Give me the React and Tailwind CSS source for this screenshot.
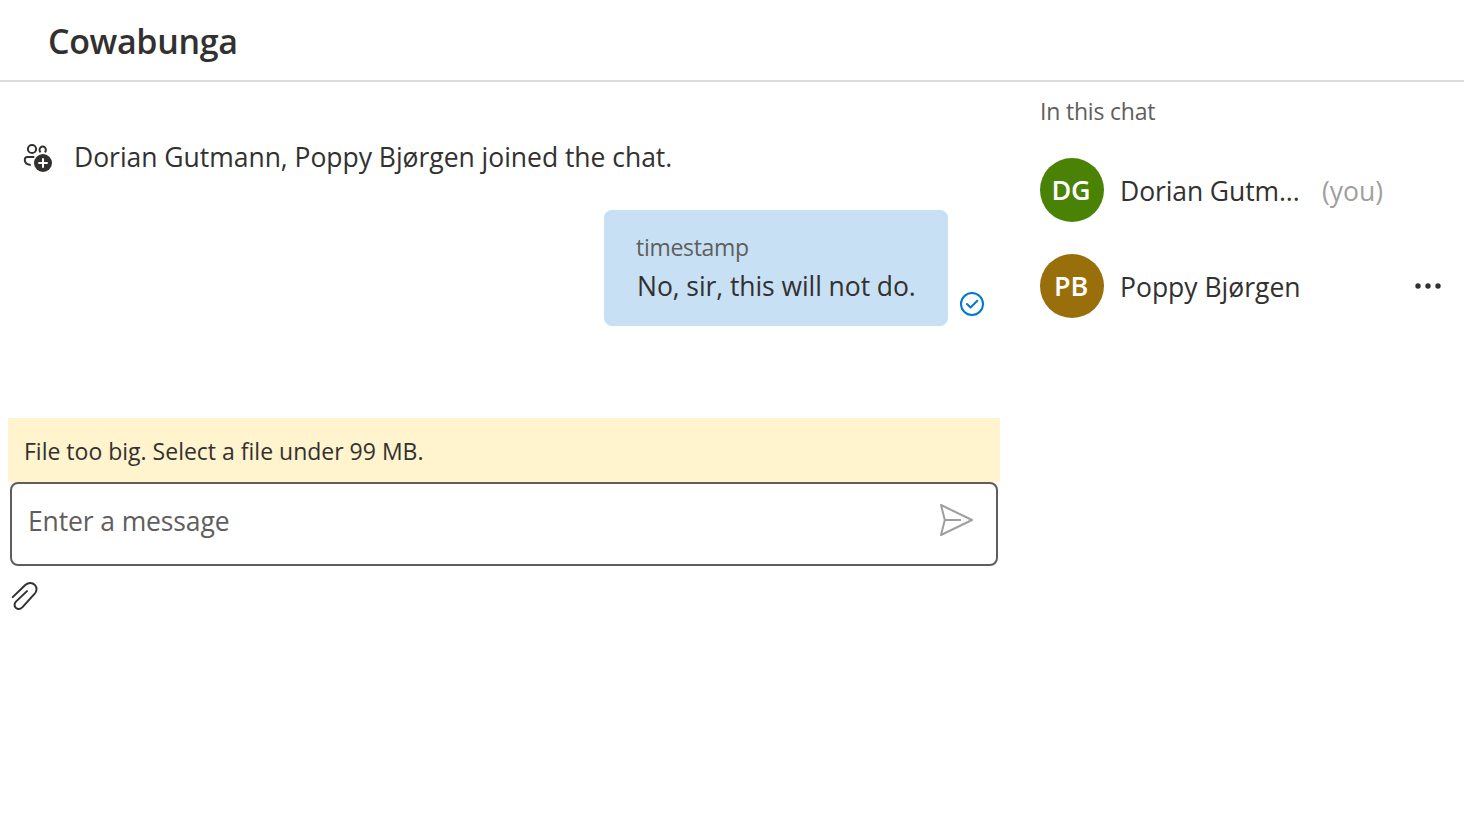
function PeopleAddIcon() {
  return (
    <svg className="h-8 w-8 shrink-0" viewBox="0 0 32 32" fill="none" stroke="#323130" strokeWidth="2">
      <circle cx="10" cy="7" r="4.1" />
      <path d="M18.600 10.200a3.200 3.200 0 1 1 4.200 0" />
      <path d="M12.300 15H5.400C3.400 15 2.800 16.200 2.800 18.100c0 2.900 2.600 4.700 6 4.800" />
      <circle cx="21" cy="21" r="9" fill="#323130" stroke="none" />
      <path d="M21 16.300v9.400M16.300 21h9.400" stroke="#fff" />
    </svg>
  );
}

function SeenIcon() {
  return (
    <svg className="h-6 w-6 shrink-0" viewBox="0 0 24 24" fill="none" stroke="#0078d4" strokeWidth="2">
      <circle cx="12" cy="12" r="11" />
      <path d="M7 12l3.600 3.500 6.700-6.700" strokeLinecap="round" strokeLinejoin="round" />
    </svg>
  );
}

function SendIcon() {
  return (
    <svg className="h-9 w-9 shrink-0" viewBox="0 0 36 36" fill="none" stroke="#a19f9d" strokeWidth="2" strokeLinejoin="round">
      <path d="M3 3L34 18 3 33 6.800 18zM6.800 18H23" />
    </svg>
  );
}

function ClipIcon() {
  return (
    <svg className="h-8 w-8" viewBox="0 0 32 32" fill="none" stroke="#323130" strokeWidth="2" strokeLinecap="round">
      <path d="M2.700 16.100L15.300 4c3.100-2.900 7.100-2.600 9.500-.100 2.500 2.600 2.200 6.500-.300 9L12.500 26.100c-2.200 2.200-4.900 2.300-6.700.700-1.800-1.700-1.600-4.400.400-6.400L17 10.100" />
    </svg>
  );
}

function Avatar({ initials, color }) {
  return (
    <div className={`flex h-16 w-16 shrink-0 items-center justify-center rounded-full pt-px pr-0.5 text-[27px] font-semibold tracking-[-0.2px] text-white ${color}`}>
      {initials}
    </div>
  );
}

export default function App() {
  return (
    <div className="flex h-screen flex-col bg-white font-['Open_Sans',sans-serif] text-[26.5px] text-[#323130]">
      <header className="flex h-[82px] items-center border-b-2 border-[#dcdcdc] px-12 pt-0.5">
        <h1 className="text-[34px] leading-[48px] font-semibold tracking-[-0.35px]">Cowabunga</h1>
      </header>
      <div className="flex flex-1">
        <main className="flex w-[1008px] flex-col px-2">
          <div className="flex h-[336px] flex-col">
            <div className="flex items-start gap-5 px-3.5 pt-14 leading-9">
              <div className="pt-1">
                <PeopleAddIcon />
              </div>
              <p className="h-9 pt-px tracking-[-0.03px] whitespace-nowrap">Dorian Gutmann, Poppy Bjørgen joined the chat.</p>
            </div>
            <div className="mt-9 flex items-end justify-end gap-3 pr-4">
              <div className="h-[116px] w-[344px] rounded-lg bg-[#c7e0f4] px-8 pt-[19px] whitespace-nowrap">
                <p className="text-[23px] leading-9 tracking-[-0.3px] text-[#605e5c]">timestamp</p>
                <p className="pt-px pl-px leading-10 tracking-[-0.07px]">No, sir, this will not do.</p>
              </div>
              <div className="pb-[10px]">
                <SeenIcon />
              </div>
            </div>
          </div>
          <div className="flex h-16 items-center bg-[#fff4ce] px-4 pt-[3px] text-[23px]">
            File too big. Select a file under 99 MB.
          </div>
          <div className="mx-0.5 flex h-[84px] items-start justify-between rounded-lg border-2 border-[#605e5c] px-4 pr-[22px]">
            <span className="pt-[19px] leading-9 tracking-[-0.12px] text-[#605e5c]">Enter a message</span>
            <div className="pt-[18px]">
              <SendIcon />
            </div>
          </div>
          <div className="pt-[15px] pl-0.5">
            <ClipIcon />
          </div>
        </main>
        <aside className="flex flex-1 flex-col pr-5 pl-8">
          <h2 className="h-12 pt-[11px] text-[23px] leading-9 tracking-[-0.2px] text-[#605e5c]">In this chat</h2>
          <div className="flex h-24 items-center pt-7 pb-1">
            <Avatar initials="DG" color="bg-[#498205]" />
            <span className="ml-4 w-[182px] pt-0.5 leading-9 tracking-[-0.1px] whitespace-nowrap">Dorian Gutm...</span>
            <span className="ml-5 pt-0.5 leading-9 text-[#a19f9d]">(you)</span>
          </div>
          <div className="flex h-24 items-center pt-7 pb-1">
            <Avatar initials="PB" color="bg-[#986f0b]" />
            <span className="ml-4 pt-0.5 leading-9">Poppy Bjørgen</span>
            <svg className="ml-auto h-8 w-8" viewBox="0 0 32 32" fill="#323130">
              <circle cx="6" cy="16" r="2.700" />
              <circle cx="16" cy="16" r="2.700" />
              <circle cx="26" cy="16" r="2.700" />
            </svg>
          </div>
        </aside>
      </div>
    </div>
  );
}
